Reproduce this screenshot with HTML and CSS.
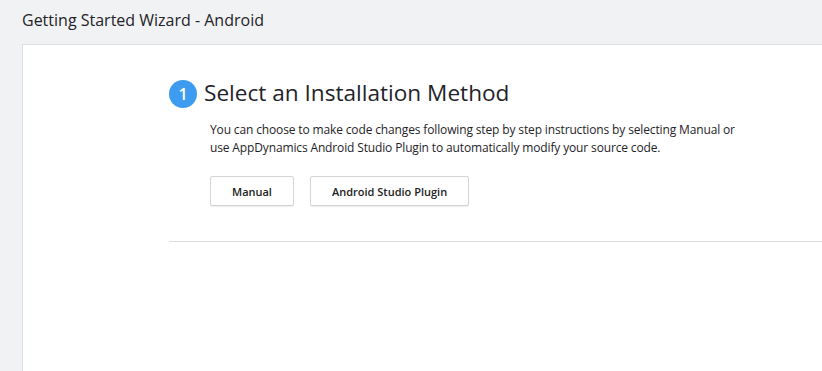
FILE: index.html
```html
<!DOCTYPE html>
<html lang="en">
<head>
    <meta charset="UTF-8">
    <meta name="viewport" content="width=device-width, initial-scale=1.0">
    <title>Getting Started Wizard - Android</title>
    <link rel="stylesheet" href="styles.css">
</head>
<body>
    <header class="page-header">
        <h1>Getting Started Wizard - Android</h1>
    </header>
    <main class="wizard-card">
        <section class="step">
            <div class="step-title">
                <span class="step-number">1</span>
                <h2>Select an Installation Method</h2>
            </div>
            <div class="step-body">
                <p>You can choose to make code changes following step by step instructions by selecting Manual or<br>use AppDynamics Android Studio Plugin to automatically modify your source code.</p>
                <div class="step-actions">
                    <button class="btn">Manual</button>
                    <button class="btn">Android Studio Plugin</button>
                </div>
            </div>
        </section>
        <hr class="step-divider">
    </main>
</body>
</html>
```

FILE: styles.css
```css
:root {
    --fondo: #f1f2f4;
    --borde: #dcdfe3;
    --texto: #1f2329;
    --azul: #3d9cf0;
}

html, body {
    height: 100%;
}

body {
    margin: 0;
    font-family: "Open Sans", Arial, sans-serif;
    background-color: var(--fondo);
    color: var(--texto);
    overflow: hidden;
    display: flex;
    flex-direction: column;
}

.page-header {
    padding: 9px 22px 0;
    height: 35px;
}

.page-header h1 {
    margin: 0;
    font-size: 16px;
    font-weight: 400;
    line-height: 22px;
}

.wizard-card {
    flex: 1;
    margin-left: 22px;
    background-color: #fff;
    border-top: 1px solid var(--borde);
    border-left: 1px solid var(--borde);
    padding: 32px 0 0 146px;
}

.step-title {
    display: flex;
    align-items: center;
    gap: 7px;
}

.step-number {
    width: 28px;
    height: 28px;
    border-radius: 50%;
    background-color: var(--azul);
    color: #fff;
    font-size: 16px;
    font-weight: 600;
    display: flex;
    align-items: center;
    justify-content: center;
    margin-top: 2px;
}

.step-title h2 {
    margin: 0;
    font-size: 22.6px;
    font-weight: 400;
    line-height: 32px;
}

.step-body {
    padding-left: 41px;
}

.step-body p {
    margin: 12px 0 0;
    font-size: 12px;
    letter-spacing: -0.14px;
    line-height: 18px;
}

.step-actions {
    display: flex;
    gap: 16px;
    margin-top: 19px;
}

.btn {
    height: 30px;
    padding: 0 21px;
    background-color: #fff;
    border: 1px solid #d3d5d8;
    border-radius: 2px;
    box-shadow: 0 1px 1px rgba(0, 0, 0, 0.08);
    font-family: inherit;
    font-size: 11px;
    font-weight: 600;
    color: #222;
    cursor: pointer;
}

.step-divider {
    margin: 35px 0 0;
    border: none;
    border-top: 1px solid #dedede;
}
```
